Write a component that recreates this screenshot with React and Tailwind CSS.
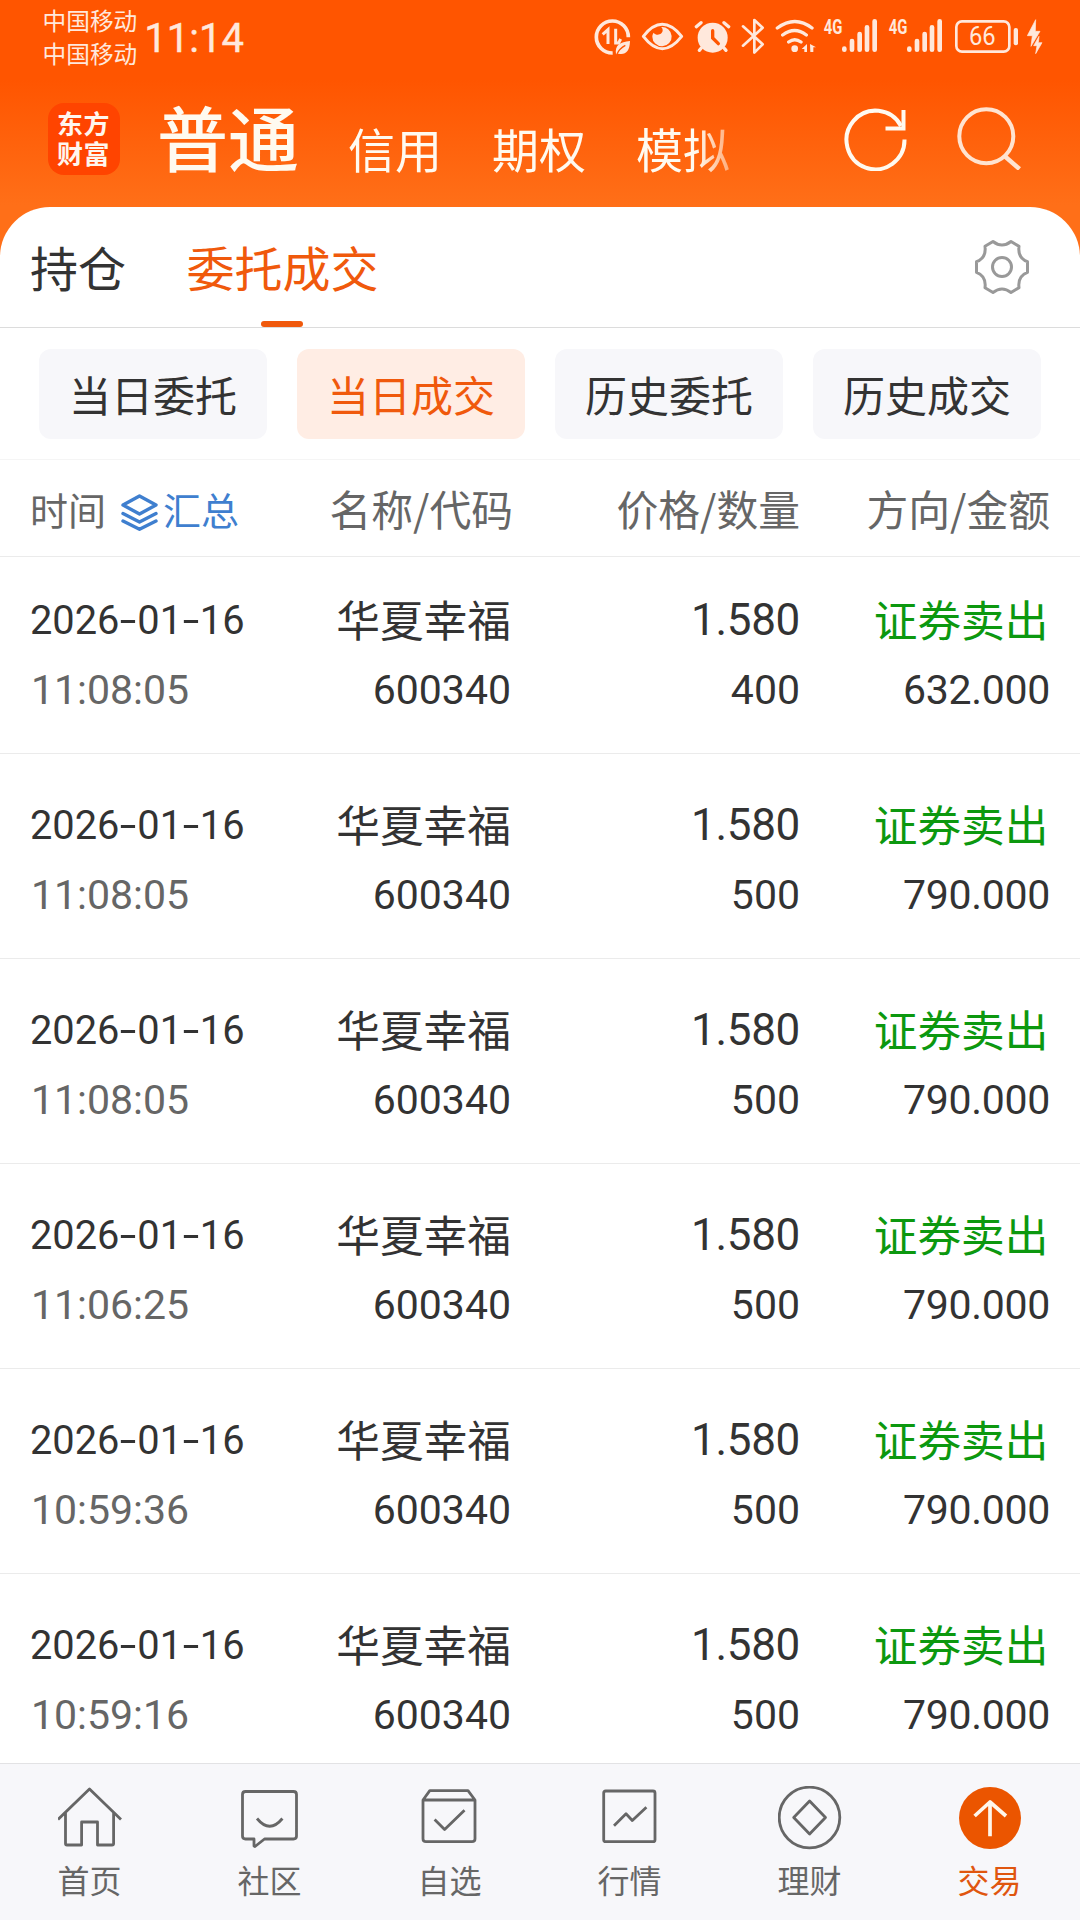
import { Fragment } from "react";

const trades = [
  { date: "2026-01-16", time: "11:08:05", qty: "400", amount: "632.000" },
  { date: "2026-01-16", time: "11:08:05", qty: "500", amount: "790.000" },
  { date: "2026-01-16", time: "11:08:05", qty: "500", amount: "790.000" },
  { date: "2026-01-16", time: "11:06:25", qty: "500", amount: "790.000" },
  { date: "2026-01-16", time: "10:59:36", qty: "500", amount: "790.000" },
  { date: "2026-01-16", time: "10:59:16", qty: "500", amount: "790.000" },
];

const filters = ["当日委托", "当日成交", "历史委托", "历史成交"];

function Signal() {
  return (
    <svg className="h-10 w-[55px]" viewBox="789 48 165 120">
      <text x="791" y="101" fontSize="58" fontWeight="700" fill="#ffe8dc" fontFamily="Roboto, sans-serif" textLength="56" lengthAdjust="spacingAndGlyphs">4G</text>
      <g stroke="#ffe8dc" strokeWidth="14" strokeLinecap="round">
        <path d="M853 146v3M876 123v26M899 102v47M921 82v67M944 64v85" />
      </g>
    </svg>
  );
}

function StatusBar() {
  return (
    <div className="flex h-20 items-start pl-[42.5px] pr-[37px] text-[#ffe8dc]">
      <div className="mt-[3.5px] text-[23.7px] leading-[33px]">
        <div>中国移动</div>
        <div>中国移动</div>
      </div>
      <div className="ml-[7px] mt-[19px] font-[Roboto,sans-serif] text-[40px] leading-10 [-webkit-text-stroke:0.4px_#ffe8dc]">11:14</div>
      <div className="ml-auto mt-4 flex">
        <svg className="h-10 w-[38px]" viewBox="99 48 114 120" fill="none" stroke="#ffe8dc">
          <path d="M158 159A48 48 0 1 1 205 112" strokeWidth="11" />
          <path d="M128 103l16-14v43M167 86v43h9l6-12" strokeWidth="9" />
          <path d="M168 163c-4-28 12-37 42-40c-1 32-14 42-34 38z" fill="#ffe8dc" stroke="none" />
          <path d="M170 164c6-14 14-22 26-28" stroke="#ff5500" strokeWidth="4" />
        </svg>
        <svg className="ml-2.5 h-10 w-[43px]" viewBox="243 48 129 120" fill="none">
          <path d="M250 109q56-72 115 0q-58 74-115 0z" stroke="#ffe8dc" strokeWidth="9" strokeLinejoin="round" />
          <path d="M303 81a29 29 0 1 1-26 29c0-5 2-9 4-12c8 11 27 6 27-7c0-5-2-8-5-10z" fill="#ffe8dc" />
        </svg>
        <svg className="ml-2.5 h-10 w-[37px]" viewBox="402 48 111 120" fill="none" stroke="#ffe8dc" strokeLinecap="round">
          <circle cx="458" cy="113" r="45" fill="#ffe8dc" stroke="none" />
          <path d="M409 80l14-12M506 80l-14-12" strokeWidth="10" />
          <path d="M424 144l-6 7M492 144l6 7" strokeWidth="10" />
          <path d="M458 92v22l17 17" stroke="#ff5500" strokeWidth="10" />
        </svg>
        <svg className="ml-2.5 h-10 w-6" viewBox="543 48 72 120" fill="none" stroke="#ffe8dc" strokeWidth="8" strokeLinecap="round" strokeLinejoin="round">
          <path d="M549 79l59 54l-25 25V60l25 23l-59 54" />
        </svg>
        <svg className="ml-2.5 h-10 w-[42px]" viewBox="645 48 126 120" fill="none" stroke="#ffe8dc" strokeWidth="10" strokeLinecap="round">
          <path d="M652 84q53-39 104 0M668 105q36-27 71 0M686 126q18-14 37 0" />
          <circle cx="704" cy="146" r="10" fill="#ffe8dc" stroke="none" />
          <path d="M725 147l16-15v24h-8v-9zM750 132l18 10h-8v14h-9z" fill="#ffe8dc" stroke="none" />
        </svg>
        <div className="ml-1.5"><Signal /></div>
        <div className="ml-2.5"><Signal /></div>
        <svg className="ml-[11px] h-10 w-[65px]" viewBox="1182 48 195 120">
          <rect x="1189" y="64" width="159" height="91" rx="17" fill="none" stroke="#ffe8dc" strokeWidth="8" />
          <rect x="1361" y="84" width="13" height="52" rx="6" fill="#ffe8dc" />
          <text x="1267" y="136" textAnchor="middle" fontSize="76" fill="#ffe8dc" fontFamily="Roboto, sans-serif" textLength="80" lengthAdjust="spacingAndGlyphs">66</text>
        </svg>
        <svg className="ml-2 h-10 w-4" viewBox="1401 48 48 120" fill="#ffe8dc" stroke="#ffe8dc" strokeWidth="2">
          <path d="M1427 59l-25 48h15l-4 32l27-45h-14zM1437 109l-16 28h10l-4 24l19-33h-11z" />
        </svg>
      </div>
    </div>
  );
}

function AccountBar() {
  return (
    <div className="flex h-[127px] items-start pl-12">
      <div className="mt-[23px] flex h-[72px] w-[72px] items-center justify-center rounded-2xl bg-[#ff4400] text-[#fff6ee]">
        <div className="-mt-0.5 w-[54px] break-all text-[26px] font-bold leading-[30px] tracking-[0.5px]">东方财富</div>
      </div>
      <div className="ml-[37px] mt-5 text-[71px] font-medium leading-[70px] text-[#fffaf0]">普通</div>
      <div className="ml-[49px] mt-[35px] flex w-[390px] gap-[50px] text-[47px] leading-[66px] text-[#fffaf0] [mask-image:linear-gradient(to_right,black_348px,transparent_412px)]">
        <span>信用</span>
        <span>期权</span>
        <span>模拟</span>
      </div>
      <svg className="ml-[105px] mt-[27px] h-16 w-16" viewBox="843 108 64 64" fill="none" stroke="#fffaf0" strokeWidth="4">
        <path d="M904.5 140.5A29 29.3 0 1 1 901 127" />
        <path d="M903.5 111v18.5H885.5" />
      </svg>
      <svg className="ml-[50px] mt-[26px] h-16 w-16" viewBox="958 106 64 64" fill="none" stroke="#ffe3d0" strokeWidth="4">
        <circle cx="987.3" cy="136.2" r="27" />
        <path d="M1005.5 156L1020.5 169" strokeWidth="4.5" />
      </svg>
    </div>
  );
}

function Tabs() {
  return (
    <div className="flex h-[121px] items-start border-b border-[#dcdcdc] pl-[30px] text-5xl leading-[118px] text-[#333333]">
      <span>持仓</span>
      <div className="relative ml-[60.5px] h-[121px] text-[#f0590c]">
        委托成交
        <span className="absolute bottom-px left-[74.5px] h-1.5 w-[42px] rounded-full bg-[#f0590c]" />
      </div>
      <svg className="ml-auto mr-[50px] mt-[32px] h-14 w-14" viewBox="-28 -28 56 56" fill="none" stroke="#999999" strokeWidth="3" strokeLinejoin="round">
        <path d="M-9-25.5Q0-18.5 9-25.5L17-20.7Q15.5-9 25.5-5.3V5.3Q15.5 9 17 20.7L9 25.5Q0 18.5-9 25.5L-17 20.7Q-15.5 9-25.5 5.3V-5.3Q-15.5-9-17-20.7Z" />
        <circle r="9.5" />
      </svg>
    </div>
  );
}

function Filters() {
  return (
    <div className="flex h-[132px] gap-[30px] border-b border-[#f5f5f5] pl-[39px] pt-[21px]">
      {filters.map((label, i) => (
        <div
          key={label}
          className={
            "h-[90px] w-[228px] rounded-xl text-center text-[42px] leading-[89px] " +
            (i === 1 ? "bg-[#ffede4] text-[#f0590c]" : "bg-[#f7f7fa] text-[#333333]")
          }
        >
          {label}
        </div>
      ))}
    </div>
  );
}

function TableHead() {
  return (
    <div className="grid h-[97px] grid-cols-[240px_243px_287px_250px] border-b border-[#ebebeb] pl-[30px] text-[41.8px] leading-[97px] text-[#666666]">
      <div className="flex items-start text-[38px]">
        <span>时间</span>
        <svg className="ml-[15px] mt-[34px] h-[37px] w-[37px]" viewBox="0 0 37 37" fill="none" stroke="#3f7fcf" strokeWidth="3.4" strokeLinecap="round" strokeLinejoin="round">
          <path d="M18.5 2L35 11L18.5 20L2 11ZM2 19.5L18.5 28L35 19.5M2 27L18.5 35.3L35 27" />
        </svg>
        <span className="ml-[5px] text-[#3f7fcf]">汇总</span>
      </div>
      <div className="text-right">名称/代码</div>
      <div className="text-right">价格/数量</div>
      <div className="text-right">方向/金额</div>
    </div>
  );
}

function DateText({ value }) {
  return value.split("-").map((part, i) => (
    <Fragment key={i}>
      {i > 0 && <span className="inline-block w-[17.8px] scale-x-150 text-center">-</span>}
      {part}
    </Fragment>
  ));
}

function TradeRow({ trade }) {
  return (
    <div className="grid h-[205px] shrink-0 grid-cols-[240px_240px_289px_250px] border-b border-[#ebebeb] pl-[31px] pt-9 text-[41px] leading-[71px] text-[#333333] first:h-[197px] first:pt-7">
      <div className="font-[Roboto,sans-serif]">
        <div className="relative -left-px h-[70px] whitespace-nowrap text-[39.8px]"><DateText value={trade.date} /></div>
        <div className="text-[#666666]">{trade.time}</div>
      </div>
      <div className="text-right">
        <div className="h-[70px] text-[43.7px] leading-[66px]">华夏幸福</div>
        <div className="font-[Roboto,sans-serif]">600340</div>
      </div>
      <div className="text-right font-[Roboto,sans-serif]">
        <div className="h-[70px] text-[44px] tracking-[-0.3px]">1.580</div>
        <div>{trade.qty}</div>
      </div>
      <div className="text-right">
        <div className="h-[70px] pr-[1.5px] text-[43.7px] leading-[66px] text-[#0c980f]">证券卖出</div>
        <div className="font-[Roboto,sans-serif] tracking-[-0.3px]">{trade.amount}</div>
      </div>
    </div>
  );
}

const navItems = [
  { label: "首页", icon: <path d="M0 33.5L31.5 3L63 33.5M7.5 27V57.5Q7.5 59 9 59H23.6V36H39.5V59H54Q55.6 59 55.6 57.5V27" /> },
  { label: "社区", icon: <path d="M7.5 5.5H55.5Q58.5 5.5 58.5 8.5V50Q58.5 53 55.5 53H26.5L17 60.5L16 60V53H7.5Q4.5 53 4.5 50V8.5Q4.5 5.5 7.5 5.5ZM19 32.5Q31.7 48 44.4 32.5" /> },
  { label: "自选", icon: <path d="M5 14L11.8 4.7H50L57 14V52.7Q57 55.7 54 55.7H8Q5 55.7 5 52.7ZM5 14H57M16.6 33.5L26.6 43.5L46.5 24.3" /> },
  { label: "行情", icon: <path d="M7.7 5H55Q57 5 57 7V53.7Q57 55.7 55 55.7H7.7Q5.7 55.7 5.7 53.7V7Q5.7 5 7.7 5ZM16 39.7L28 27.7L34.3 34.5L48.4 21.3" /> },
  { label: "理财", icon: <><circle cx="31.5" cy="31.5" r="30.3" /><path d="M31.6 15L47.5 31.5L31.6 48L15.7 31.5Z" /></> },
  { label: "交易", active: true, icon: <><circle cx="32" cy="32" r="31" fill="#eb5500" stroke="none" /><path d="M32 16V50.3M16.6 30L32 16L48 30" stroke="#fff6ea" strokeWidth="3.7" /></> },
];

function BottomNav() {
  return (
    <nav className="grid h-[157px] shrink-0 grid-cols-6 border-t border-[#e2e2e4] bg-[#f7f7fa]">
      {navItems.map((item) => (
        <div key={item.label} className={"flex flex-col items-center pt-[22px] " + (item.active ? "text-[#e0560f]" : "text-[#666666]")}>
          <svg className="h-16 w-16" viewBox="0 0 64 64" fill="none" stroke="#666666" strokeWidth="2.8" strokeLinejoin="round">{item.icon}</svg>
          <span className="mt-[11px] pr-px text-[32px] leading-9">{item.label}</span>
        </div>
      ))}
    </nav>
  );
}

export default function App() {
  return (
    <div className="flex h-[1920px] w-[1080px] flex-col overflow-hidden bg-[linear-gradient(to_bottom,#ff5500_80px,#ff6f18_205px)] font-['Noto_Sans_CJK_SC',sans-serif]">
      <StatusBar />
      <AccountBar />
      <div className="flex min-h-0 flex-1 flex-col overflow-hidden rounded-t-[50px] bg-white">
        <Tabs />
        <Filters />
        <TableHead />
        <div className="flex min-h-0 flex-1 flex-col overflow-hidden">
          {trades.map((trade, i) => (
            <TradeRow key={i} trade={trade} />
          ))}
        </div>
        <BottomNav />
      </div>
    </div>
  );
}
